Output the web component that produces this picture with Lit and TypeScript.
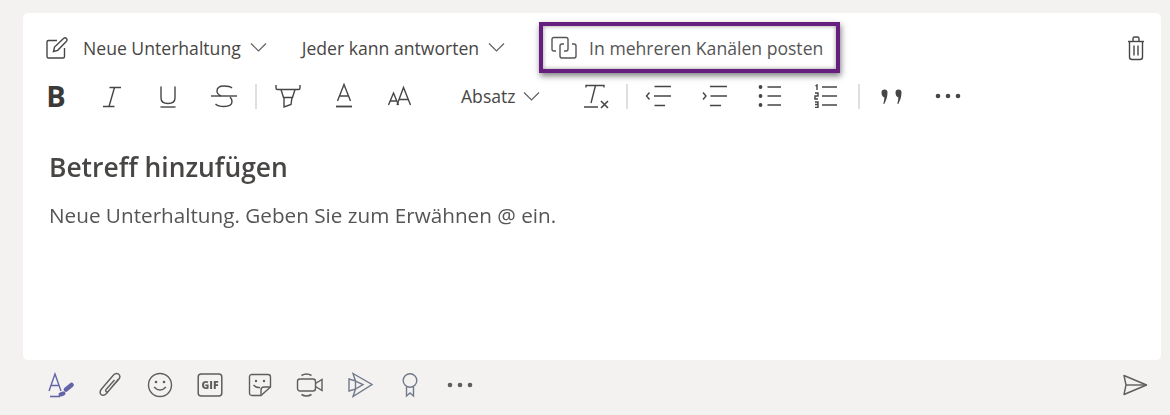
import { LitElement, html, css, svg } from "lit";
import { customElement } from "lit/decorators.js";

const chevron = svg`<path d="M1 1.5 L8.5 9 L16 1.5" fill="none" stroke="currentColor" stroke-width="1.2"/>`;
const chev = html`<svg class="chev" width="18" height="11" viewBox="0 0 18 11">${chevron}</svg>`;

const ic = (w: number, h: number, body: unknown, cls = "") =>
  html`<svg class=${cls} width=${w} height=${h} viewBox="0 0 ${w} ${h}" fill="none" stroke="currentColor" stroke-width="1.4">${body}</svg>`;

const icons = {
  compose: ic(24, 24, svg`<path d="M12 4.5H3.5Q2 4.5 2 6V20.5Q2 22 3.5 22H18Q19.5 22 19.5 20.5V12"/><path d="M8.5 15.5 L9.5 11 L18.5 2.5 Q20 1.2 21.5 2.5 Q22.8 4 21.5 5.3 L12.7 14.3Z"/>`),
  multi: ic(28, 24, svg`<path d="M7 15H5Q3 15 3 13V3.5Q3 1.5 5 1.500H17Q19 1.500 19 3.500V13Q19 15 17 15H15"/><path d="M15 8H13Q11 8 11 10V20Q11 22 13 22H25Q27 22 27 20V10Q27 8 25 8H23"/>`),
  trash: ic(20, 26, svg`<path d="M2 6.5H18"/><path d="M7 6V3.5Q7 2 8.5 2H11.5Q13 2 13 3.5V6"/><path d="M3.5 7V22Q3.5 24.5 6 24.5H14Q16.5 24.5 16.5 22V7"/><path d="M8 10.5V20.5M12 10.5V20.5"/>`),
  italic: ic(24, 24, svg`<path d="M9.5 3.5H21M3 22.5H14.5M14.5 3.5 L9 22.5"/>`),
  under: ic(24, 24, svg`<path d="M5 2.5V14Q5 19.5 12 19.5Q19 19.5 19 14V2.5"/><path d="M4.5 23H19.5"/>`),
  strike: ic(28, 24, svg`<path d="M1 12H27"/><path d="M22 4Q20 2 14 2Q7 2 7 7Q7 10 11 12M20 13Q22 15 22 17.5Q22 22.5 14 22.5Q8 22.5 5.5 20"/>`),
  highlight: ic(28, 26, svg`<path d="M2 2V5Q2 6.5 3.5 6.5H24.5Q26 6.5 26 5V2"/><path d="M7 6.5 L9.5 14.5H18.5L21 6.5"/><path d="M10 14.5V24L17 21.5L18 14.5"/>`),
  fontcolor: ic(20, 26, svg`<path d="M3.5 18L10 1.5L16.5 18M5.5 13H14.5"/><path d="M2 23.5H18" stroke-width="1.8"/>`),
  size: ic(26, 24, svg`<path d="M1.5 21L6.5 9L11.5 21M3 17H10"/><path d="M10 21L16.5 3.5L23.5 21M12 15.5H21.5"/>`),
  clear: ic(28, 26, svg`<path d="M3 4.500V2.500H21V4.500M12.500 2.500L8 20M1 24H15"/><path d="M18 18L25 25M25 18L18 25" stroke-width="1.600"/>`),
  outdent: ic(26, 24, svg`<path d="M4.5 8.5L1.5 12L4.5 15.5"/><path d="M9.500 2.5H26M9 12H26M9.500 21.5H20"/>`),
  indent: ic(26, 24, svg`<path d="M2 8.5L5 12L2 15.5"/><path d="M9 2.5H26M9.500 12H26M9 21.5H20"/>`),
  bullets: ic(24, 24, svg`<path d="M9.500 3H23M9.500 12H23M9.500 21H23"/><circle cx="2.5" cy="3" r="1.200" fill="currentColor"/><circle cx="2.5" cy="12" r="1.200" fill="currentColor"/><circle cx="2.5" cy="21" r="1.200" fill="currentColor"/>`),
  numbers: ic(24, 24, svg`<path d="M8 3H23M8 12H23M8 21H23"/><path d="M1.500 2L3 1V6M1 9H4V12H1V15H4M1 18H4V20.500H1.500M1 20.500H4V23.500H1"/>`),
  quote: html`<svg class="q" width="24" height="16" viewBox="0 0 24 16"><path fill="currentColor" d="M1.500 3.500a3 3 0 0 1 6 0c0 4.500-1.500 8-3.200 11.500l-1-.3c.7-2.500 1-4.500 1.100-6.200C2.500 7.800 1.500 6 1.500 3.500zM15.500 3.500a3 3 0 0 1 6 0c0 4.500-1.500 8-3.200 11.500l-1-.3c.7-2.500 1-4.500 1.100-6.200C16.500 7.800 15.500 6 15.500 3.500z"/></svg>`,
  more: html`<svg width="26" height="6" viewBox="0 0 26 6"><g fill="currentColor"><circle cx="3" cy="3" r="2.300"/><circle cx="13" cy="3" r="2.300"/><circle cx="23" cy="3" r="2.300"/></g></svg>`,
  format: ic(28, 26, svg`<g stroke="#6264a7"><path d="M3 19L9 2L15 19M5 13.500H13"/><path d="M4 24.500H14" stroke-width="1.600"/><path d="M14.500 22.500L17.500 21.500" stroke-width="4" stroke-linecap="round"/><path d="M20 17.500L25.500 13" stroke-width="4.500" stroke-linecap="round"/></g>`),
  clip: ic(24, 26, svg`<path d="M20.500 7L8.500 21.500Q5.500 24.500 3 22.500Q1 20 3.500 17L15.500 3Q18 .5 20.500 2Q23 4 21 7L10.500 19Q9 20.500 8 19.500Q7 18.500 8.500 17L16.500 8"/>`),
  emoji: ic(26, 26, svg`<circle cx="13" cy="13" r="11.500"/><circle cx="9" cy="10" r="1.300" fill="currentColor" stroke="none"/><circle cx="17" cy="10" r="1.300" fill="currentColor" stroke="none"/><path d="M7 15Q13 21 19 15"/>`),
  gif: html`<svg width="26" height="26" viewBox="0 0 26 26"><rect x="1.200" y="2" width="23.600" height="22" rx="3" fill="none" stroke="currentColor" stroke-width="1.500"/></svg>`,
  sticker: ic(24, 24, svg`<path d="M13 22.500H4Q1.500 22.500 1.500 20V4Q1.500 1.500 4 1.500H20Q22.500 1.500 22.500 4V14Z"/><path d="M13 22.500V17Q13 14 16 14H22.500"/><circle cx="8" cy="8" r="1.200" fill="currentColor" stroke="none"/><circle cx="16" cy="8" r="1.200" fill="currentColor" stroke="none"/><path d="M5.500 12Q8 15 12 14.500"/>`),
  video: ic(28, 26, svg`<rect x="1.500" y="7" width="18" height="12" rx="2.500"/><path d="M19.500 11.500L26 7.500V18.500L19.500 14.500"/><path d="M5.500 3.500Q10.500 .5 15.500 3.500M5.500 22.500Q10.500 25.500 15.500 22.500" stroke-width="1.600"/>`),
  stream: ic(26, 26, svg`<path d="M6 1.500L25 12.500L6 24.500L8.500 17L2 19V7L8.500 9Z"/><path d="M8.500 9V17L16 12.500Z"/>`, "slate"),
  praise: ic(18, 26, svg`<circle cx="9" cy="8.500" r="6.800"/><path d="M5.500 15V24L9 21L12.500 24V15"/>`, "slate"),
  send: ic(26, 22, svg`<path d="M2 1.500L24.500 11L2 20.500L4 11Z" stroke-linejoin="round"/><path d="M4 11H24.500"/>`),
};

@customElement("app-root")
export class AppRoot extends LitElement {
  static styles = css`
    :host {
      display: block;
      width: 1170px;
      height: 415px;
      background: #f3f2f1;
      font-family: "Open Sans", "Noto Sans", sans-serif;
      color: #484644;
      overflow: hidden;
    }
    .frame {
      filter: blur(0.35px);
      padding-top: 13px;
      height: 415px;
      box-sizing: border-box;
    }
    .card {
      margin-left: 23px;
      width: 1138px;
      height: 347px;
      background: #fff;
      border-radius: 5px;
      box-sizing: border-box;
      padding: 9px 0 0 22px;
    }
    svg { display: block; flex: none; }
    .chev { color: #616161; }
    .row1 {
      display: flex;
      align-items: center;
      height: 51px;
      font-size: 17.600px;
      white-space: nowrap;
    }
    .item { display: flex; align-items: center; }
    .compose { margin-right: 14px; }
    .item .chev { margin-left: 9px; }
    .reply { margin-left: 34px; }
    .post {
      margin-left: 33px;
      width: 301px;
      height: 51px;
      box-sizing: border-box;
      border: 4px solid #65207f;
      box-shadow: 1px 3px 6px rgba(0, 0, 0, 0.5), inset 0 0 4px rgba(0, 0, 0, 0.4);
      padding-left: 6px;
      color: #555;
    }
    .post svg { margin-right: 12px; }
    .trash { margin-left: auto; margin-right: 15px; }
    .row2 {
      display: flex;
      align-items: center;
      height: 40px;
      margin-top: 3px;
      margin-left: -22px;
      padding-left: 5px;
    }
    .cell {
      width: 56px;
      display: flex;
      justify-content: center;
      flex: none;
    }
    .bold {
      font-weight: 700;
      font-size: 29px;
      line-height: 30px;
      color: #3b3a39;
    }
    .sep {
      width: 2px;
      height: 25px;
      background: #e1dfdd;
      flex: none;
      margin: 0 3px;
    }
    .sep.tight { margin: 0 2px 0 1px; }
    .sep.wide { margin: 0 4px; }
    .absatz {
      display: flex;
      align-items: center;
      font-size: 17.600px;
      width: 141px;
      padding-left: 33px;
      box-sizing: border-box;
      white-space: nowrap;
      flex: none;
    }
    .absatz .chev { margin-left: 7px; }
    .q { margin-top: 2px; }
    .subject {
      font-weight: 600;
      font-size: 26.400px;
      line-height: 36px;
      margin: 33px 0 0 4px;
      color: #484644;
    }
    .hint {
      font-size: 20.700px;
      line-height: 28px;
      margin: 16px 0 0 4px;
      color: #555;
    }
    .row3 {
      display: flex;
      align-items: center;
      height: 50px;
      margin-left: 35px;
      margin-right: 22px;
    }
    .tool {
      width: 50px;
      display: flex;
      justify-content: center;
      flex: none;
      color: #5f5e5c;
    }
    .slate { color: #717a8a; }
    .gifbox { position: relative; width: 26px; height: 26px; }
    .gifbox span {
      position: absolute;
      inset: 0;
      display: flex;
      align-items: center;
      justify-content: center;
      font-size: 10.500px;
      font-weight: 800;
    }
    .send { margin-left: auto; color: #5f5e5c; }
  `;

  render() {
    const cell = (i: unknown) => html`<div class="cell">${i}</div>`;
    const tool = (i: unknown) => html`<div class="tool">${i}</div>`;
    return html`<div class="frame">
      <div class="card">
        <div class="row1">
          <div class="item compose">${icons.compose}</div>
          <div class="item"><span>Neue Unterhaltung</span>${chev}</div>
          <div class="item reply"><span>Jeder kann antworten</span>${chev}</div>
          <div class="item post">${icons.multi}<span>In mehreren Kanälen posten</span></div>
          <div class="trash">${icons.trash}</div>
        </div>
        <div class="row2">
          ${cell(html`<span class="bold">B</span>`)}
          ${cell(icons.italic)}
          ${cell(icons.under)}
          ${cell(icons.strike)}
          <div class="sep"></div>
          ${cell(icons.highlight)}
          ${cell(icons.fontcolor)}
          ${cell(icons.size)}
          <div class="absatz"><span>Absatz</span>${chev}</div>
          ${cell(icons.clear)}
          <div class="sep tight"></div>
          ${cell(icons.outdent)}
          ${cell(icons.indent)}
          ${cell(icons.bullets)}
          ${cell(icons.numbers)}
          <div class="sep wide"></div>
          ${cell(icons.quote)}
          ${cell(icons.more)}
        </div>
        <div class="subject">Betreff hinzufügen</div>
        <div class="hint">Neue Unterhaltung. Geben Sie zum Erwähnen @ ein.</div>
      </div>
      <div class="row3">
        ${tool(icons.format)}
        ${tool(icons.clip)}
        ${tool(icons.emoji)}
        ${tool(html`<div class="gifbox">${icons.gif}<span>GIF</span></div>`)}
        ${tool(icons.sticker)}
        ${tool(icons.video)}
        ${tool(icons.stream)}
        ${tool(icons.praise)}
        ${tool(icons.more)}
        <div class="send">${icons.send}</div>
      </div>
    </div>`;
  }
}
